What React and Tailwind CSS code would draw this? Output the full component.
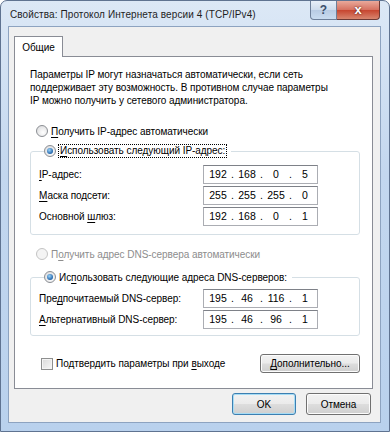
import React from "react";

const FONT = { fontFamily: '"Liberation Sans", Arial, sans-serif' };

function U({ children }) {
  return <span className="underline underline-offset-[2px]">{children}</span>;
}

function Radio({ checked, disabled }) {
  return (
    <span
      className={`relative inline-flex h-[12px] w-[12px] shrink-0 items-center justify-center rounded-full border ${
        disabled
          ? "border-[#c4c4c4] bg-[#f4f4f4]"
          : "border-[#8b8e93] bg-[radial-gradient(circle_at_60%_65%,#ffffff,#d6d7d9)]"
      }`}
    >
      {checked && (
        <span className="h-[6px] w-[6px] rounded-full bg-[radial-gradient(circle_at_40%_35%,#9bd3f7,#1b5ea7_75%)]" />
      )}
    </span>
  );
}

function IpField({ parts }) {
  return (
    <div className="flex h-[19px] w-[115px] items-center border border-[#abadb3] border-t-[#7e8188] bg-white pl-[3px] text-[10.5px] tracking-normal text-black">
      {parts.map((p, i) => (
        <React.Fragment key={i}>
          {i > 0 && <span className="w-[7px] text-center">.</span>}
          <span className="w-[22px] text-center">{p}</span>
        </React.Fragment>
      ))}
    </div>
  );
}

function Row({ label, parts }) {
  return (
    <div className="flex items-center">
      <span className="w-[164px]">{label}</span>
      <IpField parts={parts} />
    </div>
  );
}

function WinButton({ children, primary, className = "" }) {
  return (
    <button
      className={`flex items-center justify-center rounded-[3px] border text-black bg-[linear-gradient(#f2f2f2_0%,#ebebeb_48%,#dddddd_52%,#cfcfcf_100%)] ${
        primary
          ? "border-[#3c7fb1] shadow-[inset_0_0_0_1px_#a6dcf5]"
          : "border-[#707070] shadow-[inset_0_0_0_1px_#fcfcfc]"
      } ${className}`}
    >
      {children}
    </button>
  );
}

export default function App() {
  return (
    <div
      className="flex h-[432px] w-[390px] flex-col overflow-hidden rounded-t-[7px] border border-[#5f7391] bg-[linear-gradient(to_bottom,#dce8f6,#c3d7ef_40%,#b9d1ed)] text-black"
      style={FONT}
    >
      {/* Title bar */}
      <div className="flex h-[25px] items-start">
        <div className="pl-[9px] pt-[7px] text-[10px] leading-[14px] tracking-[0.1px] text-[#1e1e1e]">
          Свойства: Протокол Интернета версии 4 (TCP/IPv4)
        </div>
        <div className="ml-auto mr-[9px] flex">
          <div className="flex h-[19px] w-[27px] items-center justify-center rounded-bl-[4px] border border-t-0 border-[#6d7f99] bg-[linear-gradient(#e8eff8,#cddbec_50%,#b8cbe3_51%,#c9dcf0)] text-[12px] font-bold text-[#3c4f6b]">
            ?
          </div>
          <div className="flex h-[19px] w-[43px] items-center justify-center rounded-br-[4px] border border-l-0 border-t-0 border-[#6d3a35] bg-[linear-gradient(#e9a99b,#d5705f_50%,#c7452f_51%,#d8866f)] text-[13px] font-bold text-white [text-shadow:0_0_2px_#3a0d06]">
            x
          </div>
        </div>
      </div>

      {/* Client area */}
      <div className="mb-[8px] ml-[7px] mr-[8px] flex flex-1 flex-col border border-[#8da3c0] bg-[#f0f0f0] pl-[5px] pt-[9px] text-[10px] tracking-[-0.05px]">
        {/* Tab header */}
        <div className="flex">
          <div className="relative z-10 -mb-px flex h-[21px] w-[49px] items-center justify-center border border-b-0 border-[#898c95] bg-white">
            Общие
          </div>
        </div>

        {/* Tab panel */}
        <div className="w-[359px] border border-[#898c95] bg-white pb-[15px] pl-[15px] pt-[11px]">
          <p className="leading-[13px]">
            Параметры IP могут назначаться автоматически, если сеть
            <br />
            поддерживает эту возможность. В противном случае параметры
            <br />
            IP можно получить у сетевого администратора.
          </p>

          <label className="mt-[17px] flex h-[14px] items-center gap-[3px] pl-[6px]">
            <Radio />
            <span>
              <U>П</U>олучить IP-адрес автоматически
            </span>
          </label>

          <fieldset className="mt-[6px] w-[330px] rounded-[3px] border border-[#d5dfe5] pb-[8px] pl-[8px] pt-[7px]">
            <legend className="ml-[5px] flex h-[14px] items-center gap-[2px] pr-[4px]">
              <Radio checked />
              <span className="border border-dotted border-black px-[1px] leading-[12px]">
                <U>И</U>спользовать следующий IP-адрес:
              </span>
            </legend>
            <div className="flex flex-col gap-[2px]">
              <Row label={<><U>I</U>P-адрес:</>} parts={["192", "168", "0", "5"]} />
              <Row label={<><U>М</U>аска подсети:</>} parts={["255", "255", "255", "0"]} />
              <Row label={<>Основной <U>ш</U>люз:</>} parts={["192", "168", "0", "1"]} />
            </div>
          </fieldset>

          <label className="mt-[12px] flex h-[14px] items-center gap-[3px] pl-[6px] text-[#8d8d8d]">
            <Radio disabled />
            <span>
              П<U>о</U>лучить адрес DNS-сервера автоматически
            </span>
          </label>

          <fieldset className="mt-[9px] w-[330px] rounded-[3px] border border-[#d5dfe5] pb-[6px] pl-[8px] pt-[5px]">
            <legend className="ml-[5px] flex h-[14px] items-center gap-[3px] pr-[5px]">
              <Radio checked />
              <span>
                Ис<U>п</U>ользовать следующие адреса DNS-серверов:
              </span>
            </legend>
            <div className="flex flex-col gap-[2px]">
              <Row label={<>Пре<U>д</U>почитаемый DNS-сервер:</>} parts={["195", "46", "116", "1"]} />
              <Row label={<><U>А</U>льтернативный DNS-сервер:</>} parts={["195", "46", "96", "1"]} />
            </div>
          </fieldset>

          <div className="mt-[18px] flex w-[330px] items-center justify-between pl-[11px]">
            <label className="flex items-center gap-[3px]">
              <span className="h-[12px] w-[12px] border border-[#8e8f8f] bg-[linear-gradient(135deg,#d9d9d9,#f7f7f7)] shadow-[inset_0_0_0_1px_#f4f4f4]" />
              <span>
                Подтвердить параметры при <U>в</U>ыходе
              </span>
            </label>
            <WinButton className="h-[19px] w-[100px]">
              <U>Д</U>ополнительно...
            </WinButton>
          </div>
        </div>

        {/* Dialog buttons */}
        <div className="mt-[4px] flex justify-end gap-[10px] pr-[9px]">
          <WinButton primary className="h-[22px] w-[64px]">
            OK
          </WinButton>
          <WinButton className="h-[22px] w-[65px]">Отмена</WinButton>
        </div>
      </div>
    </div>
  );
}
